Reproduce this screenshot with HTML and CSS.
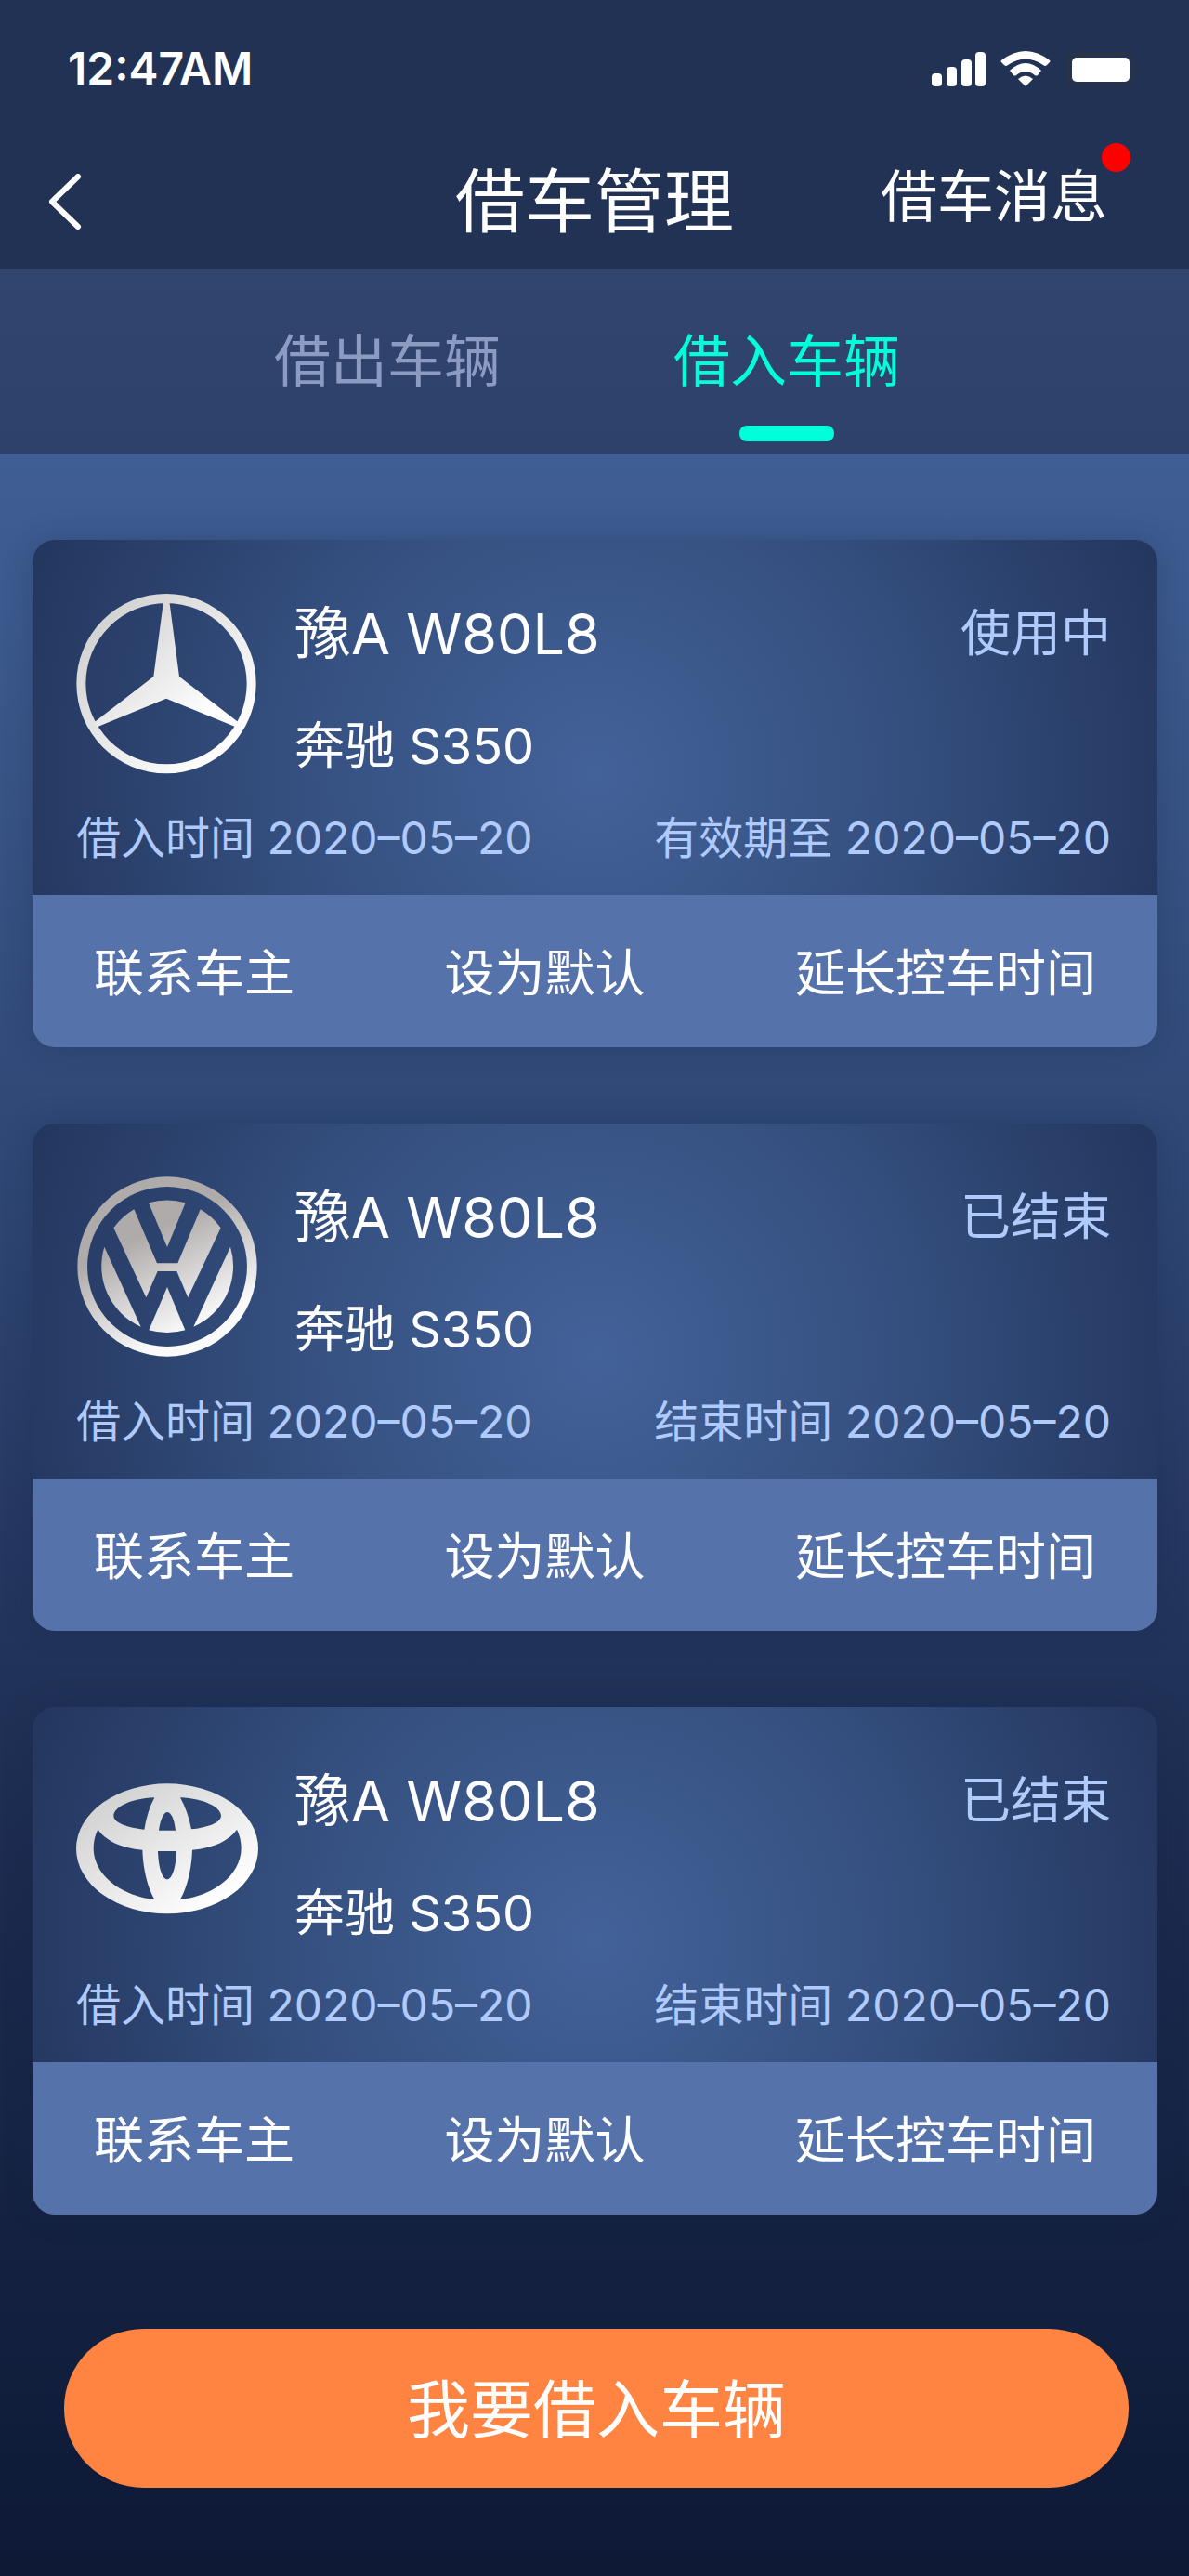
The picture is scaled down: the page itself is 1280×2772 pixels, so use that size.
FILE: index.html
```html
<!DOCTYPE html>
<html lang="zh-CN">
<head>
  <meta charset="UTF-8">
  <meta name="viewport" content="width=device-width, initial-scale=1.0">
  <title>借车管理</title>
  <link rel="stylesheet" href="styles.css">
</head>
<body>
  <header class="header">
    <!-- Phone status bar -->
    <div class="status-bar">
      <span class="time">12:47AM</span>
      <svg class="status-icons" viewBox="0 0 230 40" fill="#fff" aria-hidden="true">
        <rect x="1" y="26" width="11" height="14" rx="4"/>
        <rect x="17" y="19" width="11" height="21" rx="4"/>
        <rect x="33" y="11" width="11" height="29" rx="4"/>
        <rect x="48" y="3" width="11" height="37" rx="4"/>
        <path d="M76 14 Q75 13 76 12 Q102 -8 128 12 Q129 13 128 14 L125 17 Q123 19 121 17 Q102 4 83 17 Q81 19 79 17Z"/>
        <path d="M85 23 Q102 7 119 23 L115 28 Q114 29 112 28 Q102 20 92 28 Q90 29 89 28Z"/>
        <path d="M94 32 Q102 25 110 32 L103 39 Q102 40 101 39Z"/>
        <rect x="148" y="5" width="70" height="34" rx="8" fill="none" stroke="#283347" stroke-width="4"/>
        <rect x="152" y="9" width="62" height="26" rx="5"/>
        <path d="M224 16 Q228 21 224 27Z" fill="#283347"/>
      </svg>
    </div>
    <nav class="nav-bar">
      <button class="back" aria-label="返回">
        <svg viewBox="0 0 36 60" aria-hidden="true"><path d="M32 3 L4 30 L32 57" fill="none" stroke="#fff" stroke-width="6" stroke-linecap="round" stroke-linejoin="round"/></svg>
      </button>
      <h1>借车管理</h1>
      <a class="messages" href="#">借车消息<span class="dot"></span></a>
    </nav>
  </header>

  <div class="tabs">
    <button class="tab">借出车辆</button>
    <button class="tab active">借入车辆</button>
  </div>

  <main class="content">
    <section class="card">
      <div class="card-body">
        <div class="car">
          <svg class="logo" viewBox="36 50 588 588" aria-hidden="true">
            <defs>
              <linearGradient id="silver" x1="0" y1="0" x2="1" y2="1">
                <stop offset="0.1" stop-color="#d0d0d0"/>
                <stop offset="0.85" stop-color="#ffffff"/>
              </linearGradient>
            </defs>
            <path fill="url(#silver)" fill-rule="evenodd" d="M327 56 A290 290 0 0 1 327 636 A290 290 0 0 1 327 56Z M327 86 A260 260 0 0 0 327 606 A260 260 0 0 0 327 86Z"/>
            <path fill="url(#silver)" d="M318 80 H337 L369 323 L560 471 L551 486 L327 394 L104 486 L94 471 L286 323Z"/>
          </svg>
          <div class="info">
            <h2>豫A W80L8</h2>
            <p>奔驰 S350</p>
          </div>
          <span class="state">使用中</span>
        </div>
        <div class="dates">
          <span>借入时间 2020–05–20</span>
          <span>有效期至 2020–05–20</span>
        </div>
      </div>
      <div class="actions">
        <button>联系车主</button>
        <button>设为默认</button>
        <button>延长控车时间</button>
      </div>
    </section>

    <section class="card">
      <div class="card-body">
        <div class="car">
          <svg class="logo" viewBox="36 47 588 588" aria-hidden="true">
            <defs>
              <linearGradient id="steel" gradientUnits="userSpaceOnUse" x1="180" y1="90" x2="430" y2="590">
                <stop offset="0.3" stop-color="#b0abab"/>
                <stop offset="0.9" stop-color="#fafafa"/>
              </linearGradient>
            </defs>
            <g fill="url(#steel)">
              <path fill-rule="evenodd" d="M330 51 A290 290 0 0 1 330 631 A290 290 0 0 1 330 51Z M330 83 A258 258 0 0 0 330 599 A258 258 0 0 0 330 83Z"/>
              <path d="M270 135 A214 214 0 0 1 389 135 L330 278Z"/>
              <path d="M223 156 A214 214 0 0 0 157 216 L262 441 L299 356 H361 L397 441 L503 216 A214 214 0 0 0 437 156 L364 330 H297Z"/>
              <path d="M127 277 A214 214 0 0 0 245 535Z"/>
              <path d="M534 277 A214 214 0 0 1 415 535Z"/>
              <path d="M330 407 L271 546 A214 214 0 0 0 388 546Z"/>
            </g>
          </svg>
          <div class="info">
            <h2>豫A W80L8</h2>
            <p>奔驰 S350</p>
          </div>
          <span class="state">已结束</span>
        </div>
        <div class="dates">
          <span>借入时间 2020–05–20</span>
          <span>结束时间 2020–05–20</span>
        </div>
      </div>
      <div class="actions">
        <button>联系车主</button>
        <button>设为默认</button>
        <button>延长控车时间</button>
      </div>
    </section>

    <section class="card">
      <div class="card-body">
        <div class="car">
          <svg class="logo" viewBox="36 38 588 588" aria-hidden="true">
            <path fill="url(#silver)" fill-rule="evenodd" d="M330 117 A294 210 0 0 1 330 537 A294 210 0 0 1 330 117Z
              M289 162 Q266 205 256 265 C190 257 157 240 157 220 C157 195 210 165 289 162Z
              M372 162 C451 165 504 195 504 220 C504 240 470 257 408 264 Q396 205 372 162Z
              M303 268 C308 230 320 209 330 209 C342 209 353 230 357 268Z
              M300 335 H360 C358 390 345 426 330 426 C315 426 302 390 300 335Z
              M106 265 C130 300 180 325 250 331 C252 395 268 455 289 491 C180 480 92 410 92 325 C92 303 97 283 106 265Z
              M555 265 C531 300 480 325 411 331 C409 395 393 455 372 491 C481 480 569 410 569 325 C569 303 564 283 555 265Z"/>
          </svg>
          <div class="info">
            <h2>豫A W80L8</h2>
            <p>奔驰 S350</p>
          </div>
          <span class="state">已结束</span>
        </div>
        <div class="dates">
          <span>借入时间 2020–05–20</span>
          <span>结束时间 2020–05–20</span>
        </div>
      </div>
      <div class="actions">
        <button>联系车主</button>
        <button>设为默认</button>
        <button>延长控车时间</button>
      </div>
    </section>

    <button class="borrow">我要借入车辆</button>
  </main>
</body>
</html>
```
FILE: styles.css
```css
* {
  box-sizing: border-box;
}
body {
  margin: 0;
  font-family: Inter, "Noto Sans CJK SC", sans-serif;
  font-weight: 400;
  color: #fff;
  background-color: #0d1935;
}
h1, h2, p {
  margin: 0;
  font-weight: inherit;
}
button {
  padding: 0;
  border: none;
  background: none;
  color: inherit;
  font: inherit;
  cursor: pointer;
}
/* Header */
.header {
  background-color: #223254;
}
.status-bar {
  display: flex;
  justify-content: space-between;
  align-items: center;
  height: 144px;
  padding: 2px 48px 0 73px;
}
.time {
  font-size: 48px;
  font-weight: 600;
}
.status-icons {
  width: 230px;
  height: 40px;
}
.nav-bar {
  display: grid;
  grid-template-columns: 1fr auto 1fr;
  align-items: center;
  height: 146px;
  padding: 0 52px;
}
.back {
  justify-self: start;
  display: flex;
}
.back svg {
  width: 36px;
  height: 60px;
}
h1 {
  font-size: 75px;
  line-height: 112px;
}
.messages {
  position: relative;
  justify-self: end;
  margin: 0 36px 10px 0;
  color: #fff;
  font-size: 61px;
  line-height: 90px;
  text-decoration: none;
}
/* Unread mark */
.dot {
  position: absolute;
  top: -13px;
  right: -25px;
  width: 31px;
  height: 31px;
  border-radius: 50%;
  background-color: #ff0000;
}
/* Tabs */
.tabs {
  display: flex;
  justify-content: center;
  gap: 186px;
  padding: 0 16px 14px 0;
  background: linear-gradient(#31456f, #2e416a);
}
.tab {
  display: flex;
  flex-direction: column;
  align-items: center;
  justify-content: space-between;
  height: 185px;
  padding-top: 54px;
  font-size: 61px;
  line-height: 90px;
  color: #8c9bc2;
}
.tab.active {
  color: #00ffd9;
}
.tab.active::after {
  content: "";
  width: 102px;
  height: 17px;
  border-radius: 8px;
  background-color: #00ffd9;
}
/* Page content */
.content {
  display: flex;
  flex-direction: column;
  gap: 82px;
  padding: 92px 34px 94px 35px;
  background: linear-gradient(#3f5e94, #304876 32%, #1c2b4f 66%, #0d1935);
}
.card {
  border-radius: 24px;
  overflow: hidden;
  background: radial-gradient(circle 640px at 50% 46%, #436299, #355080 50%, #24375f);
  box-shadow: 0 0 30px rgba(20, 35, 70, 0.25);
}
.card-body {
  height: 382px;
  padding: 56px 50px 0 47px;
}
.car {
  display: flex;
  align-items: flex-start;
}
.logo {
  width: 196px;
  height: 196px;
}
.info {
  flex: 1;
  padding-left: 39px;
}
.info h2 {
  font-size: 61px;
  line-height: 90px;
}
.info p {
  margin-top: 36px;
  font-size: 54px;
  line-height: 80px;
}
.state {
  color: #b0cafc;
  font-size: 54px;
  line-height: 90px;
}
.dates {
  display: flex;
  justify-content: space-between;
  margin-top: 24px;
  color: #b0cafc;
  font-size: 48px;
  line-height: 70px;
}
.actions {
  display: flex;
  justify-content: space-between;
  align-items: center;
  height: 164px;
  padding: 0 66px 4px;
  background-color: #5573aa;
  font-size: 54px;
}
.borrow {
  height: 171px;
  margin: 41px 31px 0 34px;
  padding-bottom: 6px;
  border-radius: 86px;
  background-color: #ff8442;
  font-size: 68px;
}
```
